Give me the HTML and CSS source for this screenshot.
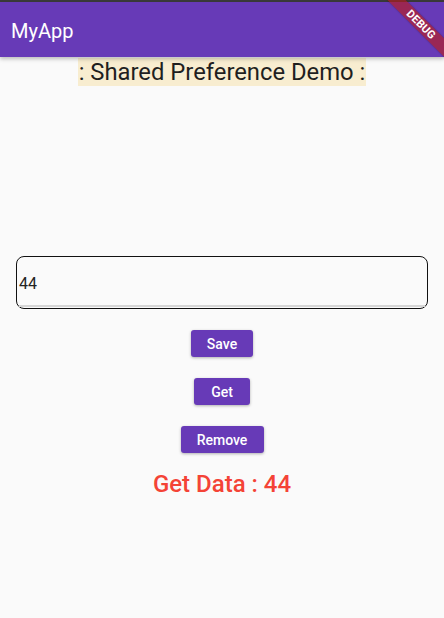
FILE: index.html
```html
<!DOCTYPE html>
<html>
<head>
<meta charset="utf-8">
<link rel="stylesheet" href="styles.css">
</head>
<body>
<div class="screen">
  <div class="status"></div>
  <header class="appbar"><span class="appbar-title">MyApp</span></header>
  <main class="content">
    <div class="heading"><span class="heading-text">: Shared Preference Demo :</span></div>
    <div class="field"><span class="field-value">44</span><div class="field-line"></div></div>
    <button class="btn btn-save">Save</button>
    <button class="btn btn-get">Get</button>
    <button class="btn btn-remove">Remove</button>
    <div class="result">Get Data : 44</div>
  </main>
  <div class="debug-banner">DEBUG</div>
</div>
</body>
</html>
```
FILE: styles.css
```css
html, body {
  margin: 0;
  padding: 0;
  background: #fafafa;
}
.screen {
  position: relative;
  width: 444px;
  height: 618px;
  overflow: hidden;
  background: #fafafa;
  font-family: Roboto, "Noto Sans", sans-serif;
}
.status {
  height: 2px;
  background: #3a3a3a;
}
.appbar {
  height: 55px;
  background: #673ab7;
  display: flex;
  align-items: center;
  padding-left: 11px;
  box-shadow: 0 2px 4px rgba(0,0,0,0.25);
  position: relative;
  z-index: 1;
}
.appbar-title {
  color: #fff;
  font-size: 20px;
  font-weight: 400;
  margin-top: 2px;
}
.content {
  display: flex;
  flex-direction: column;
  align-items: center;
  padding-top: 1px;
}
.heading {
  height: 28px;
}
.heading-text {
  display: inline-block;
  background: #f8edd0;
  color: #1f1f1f;
  font-size: 23.8px;
  line-height: 28px;
  padding: 0 1px;
}
.field {
  margin-top: 170px;
  width: 410px;
  height: 51px;
  border: 1.4px solid #111;
  border-radius: 8px;
  position: relative;
  display: flex;
  align-items: center;
}
.field-value {
  font-size: 16px;
  color: #222;
  margin-left: 2px;
  margin-top: 1px;
}
.field-line {
  position: absolute;
  left: 2px;
  right: 2px;
  bottom: 1px;
  height: 2px;
  background: #d6d6d6;
}
.btn {
  background: #673ab7;
  color: #fff;
  border: none;
  border-radius: 3px;
  height: 27px;
  font-family: Roboto, "Noto Sans", sans-serif;
  font-size: 14px;
  font-weight: 500;
  padding: 0;
  box-shadow: 0 1px 3px rgba(0,0,0,0.3);
}
.btn-save { width: 62px; margin-top: 21px; }
.btn-get { width: 56px; margin-top: 21px; }
.btn-remove { width: 83px; margin-top: 21px; }
.result {
  margin-top: 17px;
  color: #f44336;
  font-size: 24px;
  font-weight: 500;
}
.debug-banner {
  position: absolute;
  left: 371px;
  top: 18px;
  width: 100px;
  height: 13px;
  line-height: 13px;
  background: rgba(183, 28, 28, 0.63);
  color: #fff;
  font-size: 11px;
  font-weight: 700;
  text-align: center;
  letter-spacing: 0.2px;
  transform: rotate(45deg);
  z-index: 2;
  box-shadow: 0 0 2px rgba(0,0,0,0.3);
}
```
